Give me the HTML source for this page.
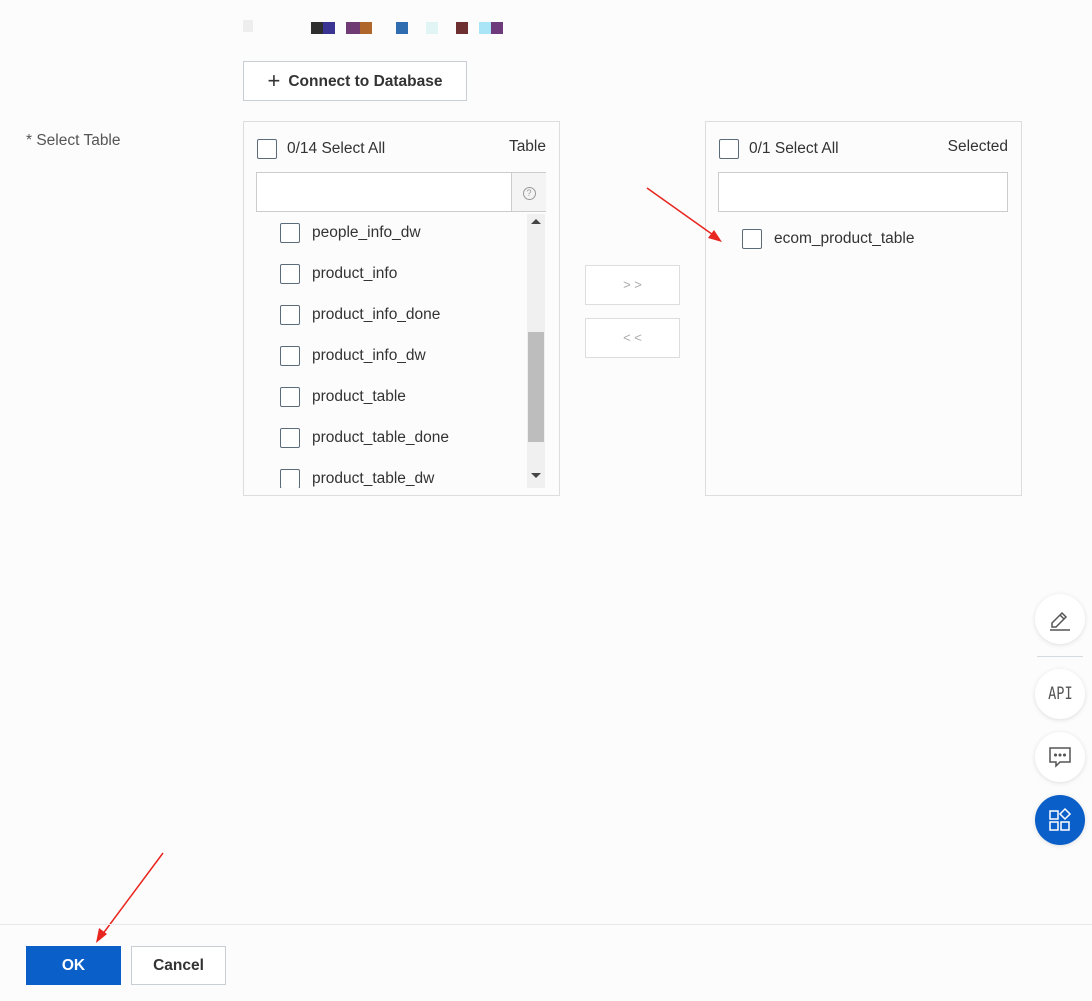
<!DOCTYPE html><html><head><style>
body{margin:0;width:1092px;height:1001px;background:#fcfcfc;font-family:"Liberation Sans",sans-serif;color:#333;position:relative;overflow:hidden;font-size:15.5px}
.a{position:absolute}
.cb{position:absolute;width:18px;height:18px;border:1px solid #5c6b7a;border-radius:2px;background:#fff}
.box{position:absolute;border:1px solid #ddd;background:#fcfcfc}
.item{position:absolute;left:36px;height:20px;width:240px}
.item .cb{left:0;top:0}
.item span{position:absolute;left:32px;top:1px;white-space:nowrap}
.btn{position:absolute;border:1px solid #c9cdd4;background:#fff;text-align:center;font-weight:bold}
.circ{position:absolute;left:1035px;width:50px;height:50px;border-radius:50%;background:#fff;box-shadow:0 1px 5px rgba(0,0,0,.12);display:flex;align-items:center;justify-content:center;color:#555}
</style></head><body>
<div class="a" style="left:243px;top:18px;height:16px;width:270px">
<span class="a" style="left:0;top:2px;width:10px;height:12px;background:#eee"></span>
<span class="a" style="left:68px;top:4px;width:24px;height:12px;background:#2e2e2e"></span>
<span class="a" style="left:80px;top:4px;width:12px;height:12px;background:#3a3592"></span>
<span class="a" style="left:103px;top:4px;width:24px;height:12px;background:#703a75"></span>
<span class="a" style="left:117px;top:4px;width:12px;height:12px;background:#b0672c"></span>
<span class="a" style="left:153px;top:4px;width:12px;height:12px;background:#2f6db0"></span>
<span class="a" style="left:183px;top:4px;width:12px;height:12px;background:#e2f5f5"></span>
<span class="a" style="left:213px;top:4px;width:12px;height:12px;background:#6d2f2f"></span>
<span class="a" style="left:236px;top:4px;width:12px;height:12px;background:#a9e5f7"></span>
<span class="a" style="left:248px;top:4px;width:12px;height:12px;background:#6e3a7c"></span>
</div>
<div class="btn" style="left:243px;top:61px;width:222px;height:38px;line-height:38px;color:#333"><span style="font-weight:normal;font-size:22px;vertical-align:-2px;margin-right:8px">+</span>Connect to Database</div>
<div class="a" style="left:26px;top:132px;color:#555">* Select Table</div>

<div class="box" style="left:243px;top:121px;width:315px;height:373px">
<div class="cb" style="left:13px;top:17px"></div>
<div class="a" style="left:43px;top:18px">0/14 Select All</div>
<div class="a" style="right:13px;top:16px">Table</div>
<div class="a" style="left:12px;top:50px;width:288px;height:38px;border:1px solid #ccc;background:#fff"></div>
<div class="a" style="left:267px;top:51px;width:34px;height:38px;border-left:1px solid #ccc;background:#f4f4f4;text-align:center;line-height:38px;color:#999;font-size:13px"><span style="display:inline-block;width:11px;height:11px;border:1px solid #999;border-radius:50%;line-height:11px;font-size:9px">?</span></div>
<div class="a" style="left:283px;top:92px;width:18px;height:274px;background:#f0f0f0"></div>
<div class="a" style="left:284px;top:210px;width:16px;height:110px;background:#bdbdbd"></div>
<div class="a" style="left:287px;top:97px;border:5px solid transparent;border-bottom-color:#444;border-top:0"></div>
<div class="a" style="left:287px;top:351px;border:5px solid transparent;border-top-color:#444;border-bottom:0"></div>
<div class="item" style="top:101px"><div class="cb"></div><span>people_info_dw</span></div>
<div class="item" style="top:142px"><div class="cb"></div><span>product_info</span></div>
<div class="item" style="top:183px"><div class="cb"></div><span>product_info_done</span></div>
<div class="item" style="top:224px"><div class="cb"></div><span>product_info_dw</span></div>
<div class="item" style="top:265px"><div class="cb"></div><span>product_table</span></div>
<div class="item" style="top:306px"><div class="cb"></div><span>product_table_done</span></div>
<div class="item" style="top:347px;height:19px;overflow:hidden"><div class="cb"></div><span>product_table_dw</span></div>
</div>

<div class="btn" style="left:585px;top:265px;width:93px;height:38px;line-height:38px;color:#aaa;font-weight:normal;font-size:13px;border-color:#ddd">&gt; &gt;</div>
<div class="btn" style="left:585px;top:318px;width:93px;height:38px;line-height:38px;color:#aaa;font-weight:normal;font-size:13px;border-color:#ddd">&lt; &lt;</div>

<div class="box" style="left:705px;top:121px;width:315px;height:373px">
<div class="cb" style="left:13px;top:17px"></div>
<div class="a" style="left:43px;top:18px">0/1 Select All</div>
<div class="a" style="right:13px;top:16px">Selected</div>
<div class="a" style="left:12px;top:50px;width:288px;height:38px;border:1px solid #ccc;background:#fff"></div>
<div class="item" style="top:107px"><div class="cb"></div><span>ecom_product_table</span></div>
</div>

<svg class="a" style="left:0;top:0" width="1092" height="1001">
<line x1="647" y1="188" x2="716" y2="237" stroke="#e8251f" stroke-width="1.5"/>
<polygon points="722,242 708,238 714,230" fill="#e8251f"/>
<line x1="163" y1="853" x2="102" y2="935" stroke="#e8251f" stroke-width="1.5"/>
<polygon points="96,943 99,928 107,934" fill="#e8251f"/>
</svg>

<div class="circ" style="top:594px"><svg width="26" height="26" viewBox="0 0 26 26" fill="none" stroke="#555" stroke-width="1.5"><path d="M5 17 L15 7 L19 11 L9 21 H5 Z M13 9 L17 13"/><path d="M3 24 H23"/></svg></div>
<div class="a" style="left:1037px;top:656px;width:46px;height:1px;background:#d5d9e0"></div>
<div class="circ" style="top:669px"><span style="font-family:'DejaVu Sans Mono',monospace;font-size:17px;display:inline-block;transform:scaleX(.8)">API</span></div>
<div class="circ" style="top:732px"><svg width="26" height="26" viewBox="0 0 26 26" fill="none" stroke="#555" stroke-width="1.5"><path d="M3 4 H23 V18 H13 L9 22 V18 H3 Z"/><circle cx="8.5" cy="11" r=".8" fill="#555"/><circle cx="13" cy="11" r=".8" fill="#555"/><circle cx="17.5" cy="11" r=".8" fill="#555"/></svg></div>
<div class="circ" style="top:795px;background:#0a5fc8"><svg width="26" height="26" viewBox="0 0 26 26" fill="none" stroke="#fff" stroke-width="1.5"><rect x="3" y="4" width="8" height="8"/><rect x="3" y="15" width="8" height="8"/><rect x="14" y="15" width="8" height="8"/><path d="M18 2 L23 7 L18 12 L13 7 Z"/></svg></div>

<div class="a" style="left:0;top:924px;width:1092px;height:1px;background:#e8e8e8"></div>
<div class="a" style="left:26px;top:946px;width:95px;height:39px;background:#0a5fc8;color:#fff;font-weight:bold;text-align:center;line-height:39px">OK</div>
<div class="btn" style="left:131px;top:946px;width:93px;height:37px;line-height:37px;color:#333">Cancel</div>
</body></html>
